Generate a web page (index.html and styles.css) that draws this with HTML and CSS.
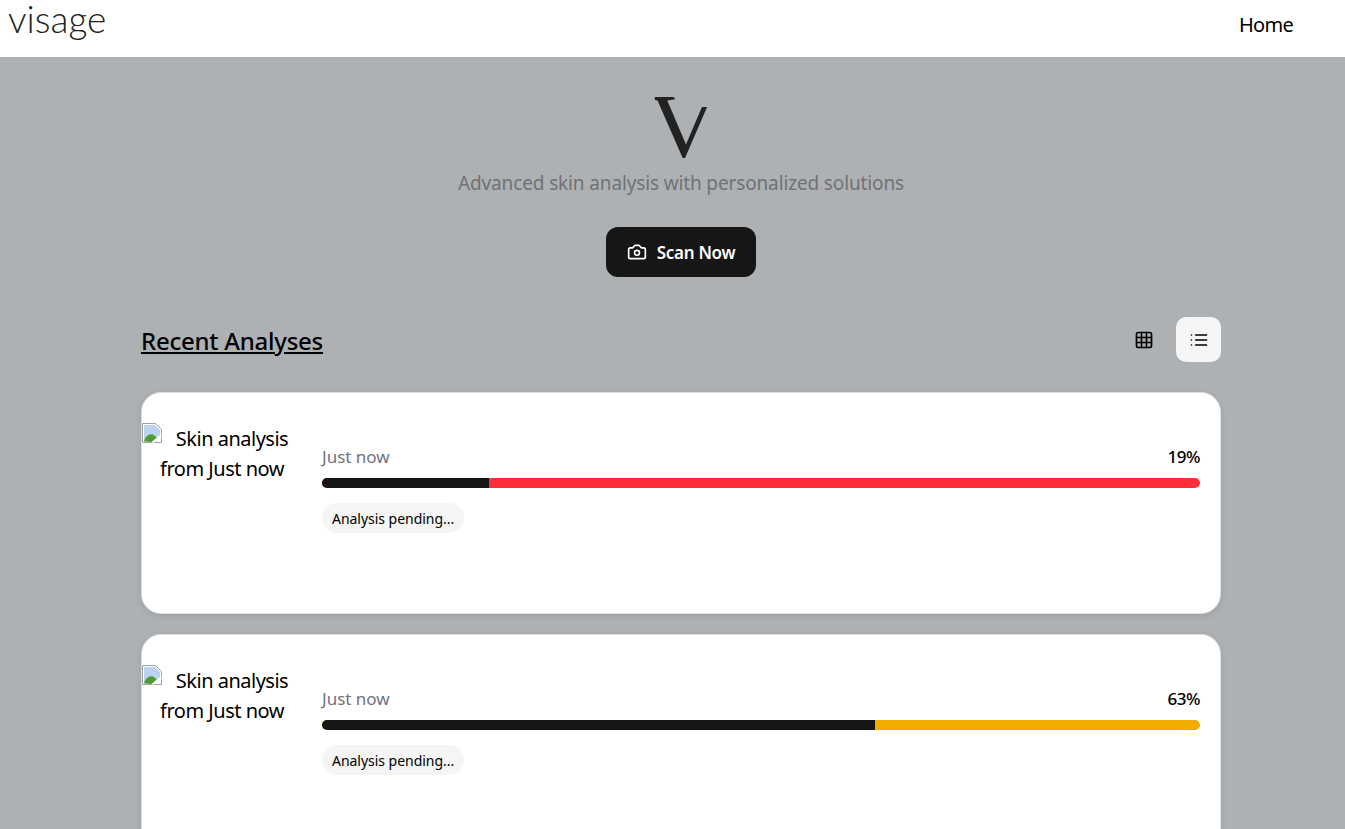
FILE: index.html
```html
<!DOCTYPE html>
<html lang="en">
<head>
    <meta charset="UTF-8">
    <meta name="viewport" content="width=device-width, initial-scale=1.0">
    <title>Visage</title>
    <link rel="stylesheet" href="styles.css">
</head>
<body>
    <nav class="navbar">
        <a class="brand" href="#">visage</a>
        <a class="nav-link" href="#">Home</a>
    </nav>

    <main class="page">
        <section class="hero">
            <div class="hero-logo">V</div>
            <p class="tagline">Advanced skin analysis with personalized solutions</p>
            <button class="scan-btn">
                <svg class="icon" viewBox="0 0 24 24"><path d="M14.500 4h-5L7 7H4a2 2 0 0 0-2 2v9a2 2 0 0 0 2 2h16a2 2 0 0 0 2-2V9a2 2 0 0 0-2-2h-3l-2.500-3z"/><circle cx="12" cy="13" r="3"/></svg>
                Scan Now
            </button>
        </section>

        <div class="section-head">
            <h2>Recent Analyses</h2>
            <div class="view-toggle">
                <button class="view-btn">
                    <svg class="icon" viewBox="0 0 24 24"><rect x="3" y="3" width="18" height="18" rx="2"/><path d="M3 9h18M3 15h18M9 3v18M15 3v18"/></svg>
                </button>
                <button class="view-btn active">
                    <svg class="icon" viewBox="0 0 24 24"><path d="M8 6h13M8 12h13M8 18h13M3 6h.01M3 12h.01M3 18h.01"/></svg>
                </button>
            </div>
        </div>

        <article class="card">
            <div class="thumb">
                <svg class="broken" viewBox="0 0 20 20"><path class="page-fill" d="M.5.5h13l6 6v13H.5z"/><path class="sky" d="M2 2h11l5 5v6L2 17z"/><path class="hill" d="M2 18.500c1-5 5-8 9-7l4 3-5 4.500z"/><path class="tear" d="M9 19.500 19.500 11v3L13 19.500z"/></svg>
                Skin analysis from Just now
            </div>
            <div class="details">
                <div class="meta">
                    <span class="date">Just now</span>
                    <span class="score">19%</span>
                </div>
                <div class="bar bar-red"><div class="bar-fill" style="width: 19%"></div></div>
                <span class="chip">Analysis pending...</span>
            </div>
        </article>

        <article class="card">
            <div class="thumb">
                <svg class="broken" viewBox="0 0 20 20"><path class="page-fill" d="M.5.5h13l6 6v13H.5z"/><path class="sky" d="M2 2h11l5 5v6L2 17z"/><path class="hill" d="M2 18.500c1-5 5-8 9-7l4 3-5 4.500z"/><path class="tear" d="M9 19.500 19.500 11v3L13 19.500z"/></svg>
                Skin analysis from Just now
            </div>
            <div class="details">
                <div class="meta">
                    <span class="date">Just now</span>
                    <span class="score">63%</span>
                </div>
                <div class="bar bar-yellow"><div class="bar-fill" style="width: 63%"></div></div>
                <span class="chip">Analysis pending...</span>
            </div>
        </article>
    </main>
</body>
</html>
```

FILE: styles.css
```css
* {
    box-sizing: border-box;
}
body {
    margin: 0;
    font-family: "Noto Sans", "Open Sans", sans-serif;
    background-color: #adb1b4;
    color: #000;
}
.navbar {
    height: 57px;
    background-color: white;
    display: flex;
    justify-content: space-between;
    align-items: flex-start;
    padding: 0 52px 0 8px;
}
.brand {
    font-family: Lato, sans-serif;
    font-weight: 300;
    font-size: 37px;
    line-height: 37px;
    color: #222;
    text-decoration: none;
}
.nav-link {
    margin-top: 11px;
    font-size: 20px;
    line-height: 27px;
    letter-spacing: -0.7px;
    color: #000;
    text-decoration: none;
}
.page {
    width: 1080px;
    margin-left: 141px;
    padding-top: 30px;
}
.hero {
    display: flex;
    flex-direction: column;
    align-items: center;
}
/* cut the serifs off the right arm, the mark has a bare tip there */
.hero-logo {
    font-family: "Liberation Serif", serif;
    font-size: 90px;
    line-height: 80px;
    height: 84px;
    color: #222;
    clip-path: polygon(6px 0, 23px 0, 23px 10px, 30px 20px, 65px 20px, 65px 84px, 0 84px);
    transform: translateX(2px) scaleX(1.05);
}
.tagline {
    margin: -1px 0 0;
    font-size: 19px;
    line-height: 26px;
    letter-spacing: -0.14px;
    color: #717274;
}
.icon {
    width: 20px;
    height: 20px;
    fill: none;
    stroke: currentColor;
    stroke-width: 2;
    stroke-linecap: round;
    stroke-linejoin: round;
}
.scan-btn {
    margin-top: 31px;
    width: 150px;
    height: 50px;
    display: flex;
    align-items: center;
    justify-content: center;
    gap: 10px;
    border: none;
    border-radius: 12px;
    background-color: #161616;
    color: white;
    font-family: inherit;
    font-size: 17px;
    font-weight: 600;
    letter-spacing: -0.3px;
    padding: 1px 0 0;
}
.scan-btn .icon {
    margin-top: -2px;
}
.section-head {
    margin-top: 40px;
    height: 45px;
    display: flex;
    justify-content: space-between;
    align-items: center;
}
.section-head h2 {
    margin: 0;
    font-size: 24px;
    font-weight: 500;
    letter-spacing: -0.25px;
    text-decoration: underline;
    padding-top: 1px;
}
.view-toggle {
    display: flex;
    gap: 9px;
}
.view-btn {
    width: 45px;
    height: 45px;
    display: flex;
    align-items: center;
    justify-content: center;
    border: none;
    border-radius: 10px;
    background: none;
    color: #000;
    padding: 0 1px 0 0;
}
.view-btn.active {
    background-color: #f5f5f5;
    padding: 0;
}
.card {
    margin-top: 30px;
    height: 222px;
    background-color: white;
    border: 1px solid #e0e0e0;
    border-radius: 20px;
    box-shadow: 0 2px 6px rgba(0,0,0,0.1);
    padding: 30px 20px 30px 0;
    display: flex;
    gap: 20px;
}
.card + .card {
    margin-top: 20px;
}
.thumb {
    width: 160px;
    flex-shrink: 0;
    padding-top: 1px;
    font-size: 20px;
    line-height: 30px;
    letter-spacing: -0.5px;
    text-align: center;
}
.broken {
    float: left;
    width: 20px;
    height: 20px;
    margin-top: -1px;
}
.page-fill {
    fill: #fff;
    stroke: #a0a0a0;
}
.sky {
    fill: #bcd3f0;
}
.hill {
    fill: #4f9a35;
}
.tear {
    fill: #fff;
}
.details {
    flex: 1;
    padding-top: 19px;
}
.meta {
    display: flex;
    justify-content: space-between;
    align-items: center;
    height: 28px;
}
.date {
    font-size: 17px;
    color: #717182;
}
.score {
    font-size: 17px;
    font-weight: 500;
    letter-spacing: -0.5px;
}
.bar {
    margin-top: 8px;
    height: 10px;
    border-radius: 5px;
    overflow: hidden;
}
.bar-red {
    background-color: #ff2d3a;
}
.bar-yellow {
    background-color: #f0ad00;
}
.bar-fill {
    height: 100%;
    background-color: #161616;
}
.chip {
    display: inline-block;
    margin-top: 15px;
    padding: 1px 10px 0;
    height: 30px;
    line-height: 29px;
    border-radius: 15px;
    background-color: #f5f5f5;
    font-size: 14px;
    letter-spacing: -0.03px;
}
```
